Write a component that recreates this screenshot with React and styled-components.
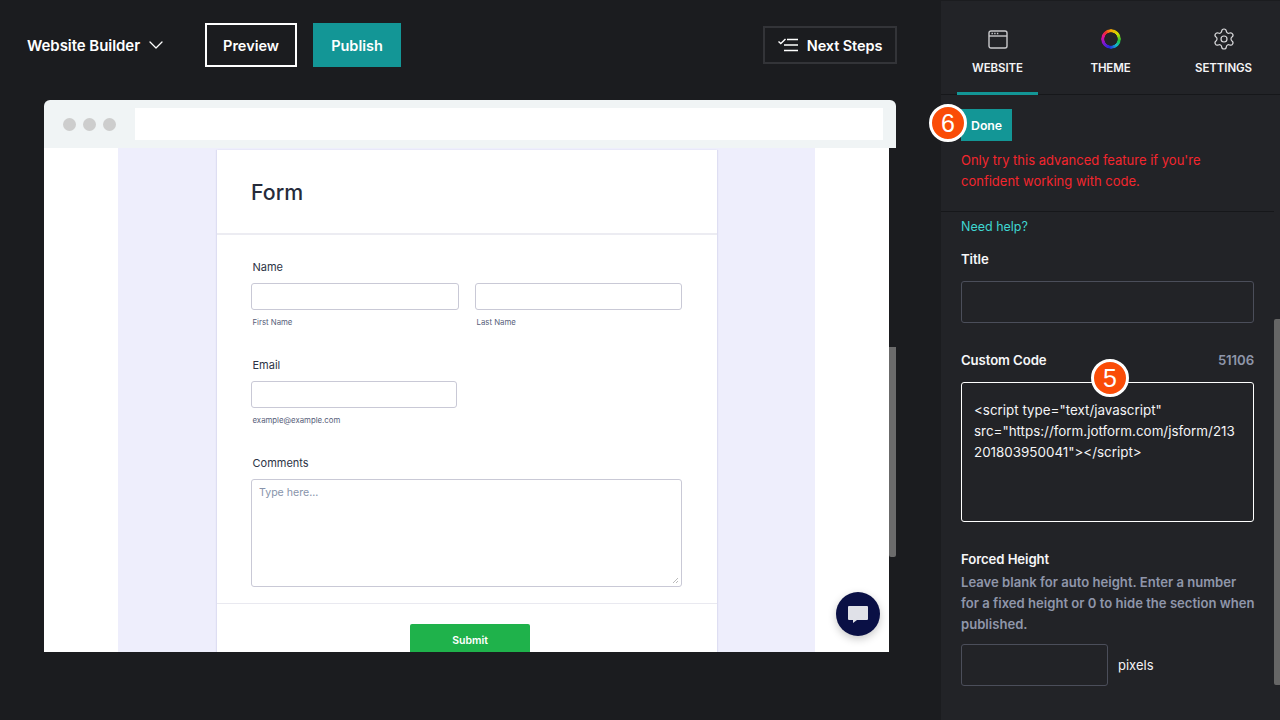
import React from 'react';
import styled, { createGlobalStyle } from 'styled-components';
import { ChevronDown, Settings } from 'lucide-react';

const Global = createGlobalStyle`
  html, body { margin: 0; padding: 0; background: #1b1c1f; }
  * { box-sizing: border-box; }
  body { font-family: Inter, "Noto Sans", sans-serif; }
`;
const Page = styled.div`display: flex; width: 1280px; height: 720px; overflow: hidden; background: #1b1c1f;`;
const Main = styled.main`width: 941px; flex: none; display: flex; flex-direction: column;`;
const Header = styled.header`display: flex; align-items: center; height: 100px; padding: 0 44px 10px 27px;`;
const Brand = styled.div`display: flex; align-items: center; color: #fff; font-size: 15px; font-weight: 600; width: 178px; gap: 4px; letter-spacing: -0.05px;`;
const HeaderButton = styled.button`
  height: 44px; font: 600 14.5px Inter, sans-serif; color: #fff; padding: 0; margin-right: 16px;
  width: ${p => p.$w}px; border: ${p => p.$outline ? '2px solid #fff' : 'none'};
  background: ${p => p.$outline ? 'transparent' : '#139696'};
`;
const NextSteps = styled.button`
  margin-left: auto; width: 134px; height: 38px; display: flex; align-items: center; justify-content: center; gap: 9px;
  background: transparent; border: 2px solid #333438; color: #fff; font: 600 14.5px Inter, sans-serif; padding: 0; letter-spacing: -0.1px;
`;
const Frame = styled.div`margin: 0 45px 0 44px; width: 852px; height: 552px; display: flex; flex-direction: column; background: #1b1c1f;`;
const FrameBar = styled.div`height: 48px; flex: none; display: flex; align-items: center; background: #f0f4f5; border-radius: 6px 6px 0 0; padding: 0 13px 0 19px;`;
const Dots = styled.div`display: flex; gap: 7px; margin-right: 19px;`;
const Dot = styled.span`width: 13px; height: 13px; border-radius: 50%; background: #cdcdcd;`;
const UrlBar = styled.div`flex: 1; height: 32px; background: #fff;`;
const FrameBody = styled.div`flex: 1; display: flex; min-height: 0;`;
const Viewport = styled.div`position: relative; flex: 1; background: #fff; padding: 0 74px; overflow: hidden;`;
const Lavender = styled.div`height: 100%; background: #eeeefc; padding: 2px 98px 0 99px;`;
const Card = styled.div`background: #fff; height: 502px; box-shadow: -1px 0 1px rgba(90,90,160,.1), 1px 0 1px rgba(90,90,160,.1);`;
const CardHead = styled.div`height: 85px; padding: 26px 0 0 34px; border-bottom: 2px solid #ececf2;`;
const FormTitle = styled.h1`margin: 0; font-size: 21.3px; line-height: 32px; font-weight: 500; color: #262b3a;`;
const CardBody = styled.div`display: flow-root; padding: 0 35px 0 34px; height: 369px; border-bottom: 1px solid #e9e9f0;`;
const FieldLabel = styled.div`font-size: 11px; line-height: 16px; color: #2c3345; padding-left: 1.5px; margin-top: ${p => p.$top}px; margin-bottom: 8px;`;
const FieldRow = styled.div`display: flex; gap: 16px;`;
const FieldCol = styled.div`width: ${p => p.$w}px;`;
const BoxInput = styled.div`height: 27px; border: 1px solid #c9c9d6; border-radius: 3px; background: #fff;`;
const SubLabel = styled.div`font-size: 7.8px; line-height: 12px; color: #57607a; padding-left: 1.5px; margin-top: 6px;`;
const CommentBox = styled.div`position: relative; height: 108px; border: 1px solid #c9c9d6; border-radius: 3px; padding: 6px 7px; font-size: 10.6px; line-height: 14px; color: #8894ab;`;
const Grip = styled.svg`position: absolute; right: 2px; bottom: 2px;`;
const CardFoot = styled.div`display: flex; justify-content: center; padding: 20px 0 0 6px;`;
const Submit = styled.button`width: 120px; height: 32px; border: none; border-radius: 2px; background: #1fb24b; color: #fff; font: 600 10.5px Inter, sans-serif; padding: 0;`;
const ChatBubble = styled.div`position: absolute; right: 9px; bottom: 16px; width: 44px; height: 44px; border-radius: 50%; background: #0a1045; display: flex; align-items: center; justify-content: center; box-shadow: 0 3px 8px rgba(0,0,0,.22);`;
const ScrollTrack = styled.div`width: 7px; flex: none; padding-top: 199px;`;
const ScrollThumb = styled.div`height: 210px; background: #6b6b6b; border-radius: 0 0 2px 2px;`;

const Panel = styled.aside`position: relative; flex: none; width: 339px; background: #222327; border-top: 1px solid #1b1c1f; display: flex; flex-direction: column;`;
const Tabs = styled.nav`display: grid; grid-template-columns: repeat(3, 113px); height: 94px; flex: none; border-bottom: 1px solid #16171a;`;
const Tab = styled.div`display: flex; flex-direction: column; align-items: center; padding-top: 27px; position: relative; color: #f4f4f6; font-size: 11.5px; font-weight: 600; letter-spacing: -0.1px;`;
const TabIcon = styled.div`height: 22px; display: flex; align-items: center; justify-content: center; margin-bottom: 11px;`;
const ActiveBar = styled.span`position: absolute; left: 16px; right: 16px; bottom: -1px; height: 3px; background: #139696;`;
const Wheel = styled.span`width: 20px; height: 20px; border-radius: 50%; background: conic-gradient(#f6a800 0deg, #c9e000 55deg, #22c43a 100deg, #12b7c9 140deg, #2228e0 190deg, #8a14c8 245deg, #e0109a 285deg, #ef2c2c 320deg, #f6a800 360deg);
  -webkit-mask: radial-gradient(circle, transparent 6.4px, #000 7px); mask: radial-gradient(circle, transparent 6.4px, #000 7px);`;
const Notice = styled.section`padding: 14px 0 0 20px; height: 117px; margin-right: 6px; border-bottom: 1px solid #16171a; position: relative;`;
const DoneButton = styled.button`display: block; width: 51px; height: 32px; background: #139696; border: none; padding: 0; color: #fff; font: 600 12.3px Inter, sans-serif; letter-spacing: -0.1px;`;
const Warning = styled.p`margin: 9px 0 0; font-size: 13px; line-height: 21px; color: #f3262e; width: 280px;`;
const Badge = styled.span`
  position: absolute; left: ${p => p.$left}px; top: ${p => p.$top}px; width: 38px; height: 38px; border-radius: 50%;
  background: #fa4c07; border: 3px solid #fff; color: #fff; display: flex; align-items: center; justify-content: center;
  font: 400 25px "Liberation Sans", sans-serif; line-height: 1;
`;
const Form = styled.section`padding: 5px 26px 0 20px;`;
const HelpLink = styled.a`display: block; font-size: 12.5px; line-height: 20px; color: #3fd5d0;`;
const Label = styled.div`display: flex; justify-content: space-between; color: #f6f6f8; font-size: 13.2px; font-weight: 600; line-height: 20px; margin-top: ${p => p.$top}px; margin-bottom: ${p => p.$bottom}px; letter-spacing: -0.1px;`;
const Count = styled.span`color: #8f96aa;`;
const TextBox = styled.div`height: 42px; width: ${p => p.$w || 293}px; border: 1px solid #4b4e5a; border-radius: 3px;`;
const CodeWrap = styled.div`position: relative;`;
const CodeBox = styled.div`height: 140px; border: 1px solid #fff; border-radius: 3px; padding: 17px 12px; color: #f4f4f6; font-size: 13.4px; line-height: 21px; white-space: pre-line;`;
const Hint = styled.p`margin: 3px 0 9px; color: #8f96aa; font-size: 13.1px; font-weight: 600; line-height: 21px; white-space: nowrap;`;
const HeightRow = styled.div`display: flex; align-items: center; gap: 10px; color: #f4f4f6; font-size: 13px;`;
const PanelScroll = styled.div`position: absolute; right: 0; top: 318px; width: 6px; height: 366px; background: #666; border-radius: 2px 0 0 2px;`;

const WebsiteIcon = () => (
  <svg width="20" height="19" viewBox="0 0 20 19" fill="none" aria-hidden="true">
    <rect x="1" y="1" width="18" height="17" rx="2" stroke="#c9c9cc" strokeWidth="1.4" />
    <path d="M1 6h18" stroke="#c9c9cc" strokeWidth="1.4" />
    <path d="M3.5 3.5h1.4M6.2 3.5h1.4M8.9 3.5h1.4" stroke="#c9c9cc" strokeWidth="1.4" />
  </svg>
);
const StepsIcon = () => (
  <svg width="20" height="14" viewBox="0 0 20 14" fill="none" aria-hidden="true">
    <path d="M.5 3.5 2.8 5.5 7.5 1" stroke="#fff" strokeWidth="1.4" />
    <path d="M9 1.5h11M6 7h14M6 12.5h14" stroke="#fff" strokeWidth="1.7" />
  </svg>
);
const ChatIcon = () => (
  <svg width="20" height="17" viewBox="0 0 20 17" aria-hidden="true">
    <path d="M1 0h18a1 1 0 0 1 1 1v12a1 1 0 0 1-1 1H9l-4 3v-3H1a1 1 0 0 1-1-1V1a1 1 0 0 1 1-1z" fill="#e0e1e8" />
  </svg>
);

export default function App() {
  return (
    <Page>
      <Global />
      <Main>
        <Header>
          <Brand>Website Builder <ChevronDown size={24} strokeWidth={1.3} /></Brand>
          <HeaderButton $outline $w={92}>Preview</HeaderButton>
          <HeaderButton $w={88}>Publish</HeaderButton>
          <NextSteps><StepsIcon />Next Steps</NextSteps>
        </Header>
        <Frame>
          <FrameBar>
            <Dots><Dot /><Dot /><Dot /></Dots>
            <UrlBar />
          </FrameBar>
          <FrameBody>
            <Viewport>
              <Lavender>
                <Card>
                  <CardHead><FormTitle>Form</FormTitle></CardHead>
                  <CardBody>
                    <FieldLabel $top={24}>Name</FieldLabel>
                    <FieldRow>
                      <FieldCol $w={208}><BoxInput /><SubLabel>First Name</SubLabel></FieldCol>
                      <FieldCol $w={207}><BoxInput /><SubLabel>Last Name</SubLabel></FieldCol>
                    </FieldRow>
                    <FieldLabel $top={29}>Email</FieldLabel>
                    <FieldCol $w={206}><BoxInput /><SubLabel>example@example.com</SubLabel></FieldCol>
                    <FieldLabel $top={29}>Comments</FieldLabel>
                    <CommentBox>
                      Type here...
                      <Grip width="7" height="7" viewBox="0 0 7 7"><path d="M1 6 6 1M4 6l2-2" stroke="#aaa" strokeWidth=".8" /></Grip>
                    </CommentBox>
                  </CardBody>
                  <CardFoot><Submit>Submit</Submit></CardFoot>
                </Card>
              </Lavender>
              <ChatBubble><ChatIcon /></ChatBubble>
            </Viewport>
            <ScrollTrack><ScrollThumb /></ScrollTrack>
          </FrameBody>
        </Frame>
      </Main>
      <Panel>
        <Tabs>
          <Tab><TabIcon><WebsiteIcon /></TabIcon>WEBSITE<ActiveBar /></Tab>
          <Tab><TabIcon><Wheel /></TabIcon>THEME</Tab>
          <Tab><TabIcon><Settings size={24} strokeWidth={1.2} color="#d8d8da" /></TabIcon>SETTINGS</Tab>
        </Tabs>
        <Notice>
          <DoneButton>Done</DoneButton>
          <Warning>Only try this advanced feature if you're confident working with code.</Warning>
          <Badge $left={-12} $top={9}>6</Badge>
        </Notice>
        <Form>
          <HelpLink>Need help?</HelpLink>
          <Label $top={12} $bottom={12}>Title</Label>
          <TextBox />
          <Label $top={27} $bottom={12}>Custom Code<Count>51106</Count></Label>
          <CodeWrap>
            <CodeBox>{'<script type="text/javascript"\nsrc="https://form.jotform.com/jsform/213\n201803950041"></script>'}</CodeBox>
            <Badge $left={130} $top={-23}>5</Badge>
          </CodeWrap>
          <Label $top={27} $bottom={0}>Forced Height</Label>
          <Hint>Leave blank for auto height. Enter a number<br />for a fixed height or 0 to hide the section when<br />published.</Hint>
          <HeightRow><TextBox $w={147} />pixels</HeightRow>
        </Form>
        <PanelScroll />
      </Panel>
    </Page>
  );
}
